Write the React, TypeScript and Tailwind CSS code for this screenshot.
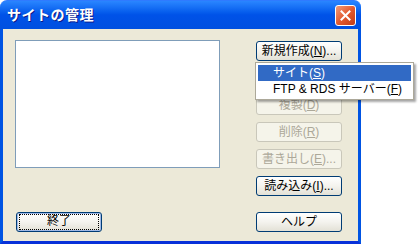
import React from "react";

const font = { fontFamily: '"Liberation Sans", "Noto Sans CJK JP", sans-serif' };

function XpButton({
  label,
  k,
  tail = "",
  disabled = false,
  focused = false,
}: {
  label: string;
  k: string;
  tail?: string;
  disabled?: boolean;
  focused?: boolean;
}) {
  const base =
    "h-[20px] w-[86px] rounded-[3px] border flex items-center justify-center text-[12px] leading-none";
  const cls = disabled
    ? "border-[#c9c7ba] bg-[#f5f4ea] text-[#aca899]"
    : "border-[#003c74] bg-gradient-to-b from-[#ffffff] via-[#f4f3ee] to-[#e3e1d6] text-black";
  return (
    <div className={`${base} ${cls} ${focused ? "shadow-[inset_0_0_0_1px_#9fb9e6]" : ""}`}>
      <span
        className={
          focused
            ? "w-[80px] h-[16px] flex items-center justify-center pb-[2px] border border-dotted border-black"
            : "px-[2px] py-[1px]"
        }
      >
        {label}
        {k && (
          <>
            (<u>{k}</u>)
          </>
        )}
        {tail}
      </span>
    </div>
  );
}

export default function App() {
  return (
    <div className="relative w-[418px] h-[244px] bg-white overflow-hidden" style={font}>
      <div className="w-[361px] h-[244px] flex flex-col">
        {/* title bar */}
        <div className="h-[29px] rounded-t-[7px] bg-gradient-to-b from-[#2a86ff] via-[#0052e8] to-[#0050e0] flex items-center justify-between pl-[7px] pr-[5px] border-t border-[#2f7bff]">
          <span className="text-white font-bold text-[14px] tracking-[0.5px] [text-shadow:1px_1px_0_#0a1a8a]">
            サイトの管理
          </span>
          <div className="w-[21px] h-[21px] rounded-[3px] border border-white bg-gradient-to-br from-[#f09a78] via-[#e35a2f] to-[#c23b14] flex items-center justify-center">
            <svg width="11" height="11" viewBox="0 0 11 11">
              <path d="M1.5 1.5 L9.5 9.5 M9.5 1.5 L1.5 9.5" stroke="white" strokeWidth="2" strokeLinecap="square" />
            </svg>
          </div>
        </div>
        {/* body */}
        <div className="flex-1 bg-[#ece9d8] border-x-[3px] border-b-[3px] border-x-[#0054e3] border-b-[#0831d9] flex pl-[12px] pt-[11px] gap-[36px]">
          <div className="flex flex-col">
            <div className="w-[205px] h-[128px] bg-white border border-[#7f9db9]" />
            <div className="mt-[44px] ml-[1px]">
              <XpButton label="終了" k="" focused />
            </div>
          </div>
          <div className="flex flex-col mt-[1px]">
            <div className="flex flex-col gap-[7px]">
              <XpButton label="新規作成" k="N" tail="..." />
              <XpButton label="" k="" disabled />
              <XpButton label="複製" k="D" disabled />
              <XpButton label="削除" k="R" disabled />
              <XpButton label="書き出し" k="E" tail="..." disabled />
              <XpButton label="読み込み" k="I" tail="..." />
            </div>
            <div className="mt-[16px]">
              <XpButton label="ヘルプ" k="" />
            </div>
          </div>
        </div>
      </div>
      {/* popup menu */}
      <div className="absolute left-[255px] top-[62px] w-[159px] bg-white border border-[#aca899] p-[2px] shadow-[2px_2px_2px_rgba(0,0,0,0.35)] text-[12px] leading-none">
        <div className="h-[16px] bg-[#316ac5] text-white flex items-center pl-[15px]">
          サイト(<u>S</u>)
        </div>
        <div className="h-[16px] text-black flex items-center pl-[15px]">
          FTP &amp; RDS サーバー(<u>F</u>)
        </div>
      </div>
    </div>
  );
}
